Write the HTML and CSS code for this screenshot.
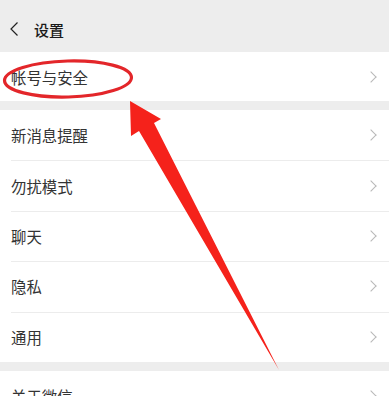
FILE: index.html
```html
<!DOCTYPE html>
<html lang="zh-CN">
<head>
    <meta charset="UTF-8">
    <meta name="viewport" content="width=device-width, initial-scale=1.0">
    <title>设置</title>
    <link rel="stylesheet" href="styles.css">
</head>
<body>
    <div class="page">
        <div class="header">
            <svg class="back" width="10" height="16" viewBox="0 0 10 16">
                <path d="M8.5 1.5 L2 8 L8.5 14.5" fill="none" stroke="#222" stroke-width="1.2"/>
            </svg>
            <span class="title">设置</span>
        </div>

        <div class="group group-first">
            <div class="row">
                <span class="label">帐号与安全</span>
                <span class="chevron"></span>
            </div>
        </div>

        <div class="group">
            <div class="row"><span class="label">新消息提醒</span><span class="chevron"></span></div>
            <div class="row"><span class="label">勿扰模式</span><span class="chevron"></span></div>
            <div class="row"><span class="label">聊天</span><span class="chevron"></span></div>
            <div class="row"><span class="label">隐私</span><span class="chevron"></span></div>
            <div class="row"><span class="label">通用</span><span class="chevron"></span></div>
        </div>

        <div class="group">
            <div class="row"><span class="label">关于微信</span><span class="chevron"></span></div>
        </div>
    </div>

    <!-- red annotation drawn over the screenshot -->
    <svg class="annotation" width="389" height="396" viewBox="0 0 389 396">
        <ellipse cx="68" cy="79" rx="63.5" ry="18" fill="none" stroke="#e3262a" stroke-width="3.2" transform="rotate(-1.5 68 79)"/>
        <polygon points="130,101 161,119 154,123 279,370 139,131 131,136" fill="#f5221b"/>
    </svg>
</body>
</html>
```

FILE: styles.css
```css
body {
    margin: 0;
    padding: 0;
    background-color: #ededed;
    font-family: 'Noto Sans CJK SC', 'Noto Sans', sans-serif;
    overflow: hidden;
    height: 396px;
    position: relative;
}

.page {
    display: flex;
    flex-direction: column;
}

.header {
    height: 52px;
    display: flex;
    align-items: center;
    padding-left: 9px;
    padding-top: 6px;
    box-sizing: border-box;
    background-color: #ededed;
}

.back {
    display: block;
}

.title {
    margin-left: 15px;
    font-size: 15px;
    font-weight: 500;
    color: #1a1a1a;
}

.group {
    background-color: #fff;
    margin-bottom: 9px;
}

.group-first .row {
    height: 49px;
}

.row {
    height: 50.4px;
    display: flex;
    align-items: center;
    justify-content: space-between;
    padding: 0 12px 0 11px;
    box-sizing: border-box;
    position: relative;
}

.row + .row::before {
    content: '';
    position: absolute;
    top: 0;
    left: 11px;
    right: 0;
    height: 1px;
    background-color: #ececec;
}

.label {
    font-size: 15.4px;
    color: #333;
}

.chevron {
    width: 7px;
    height: 7px;
    border-top: 1.5px solid #b8b8b8;
    border-right: 1.5px solid #b8b8b8;
    transform: rotate(45deg);
    margin-right: 2px;
}

.annotation {
    position: absolute;
    top: 0;
    left: 0;
    pointer-events: none;
}
```
